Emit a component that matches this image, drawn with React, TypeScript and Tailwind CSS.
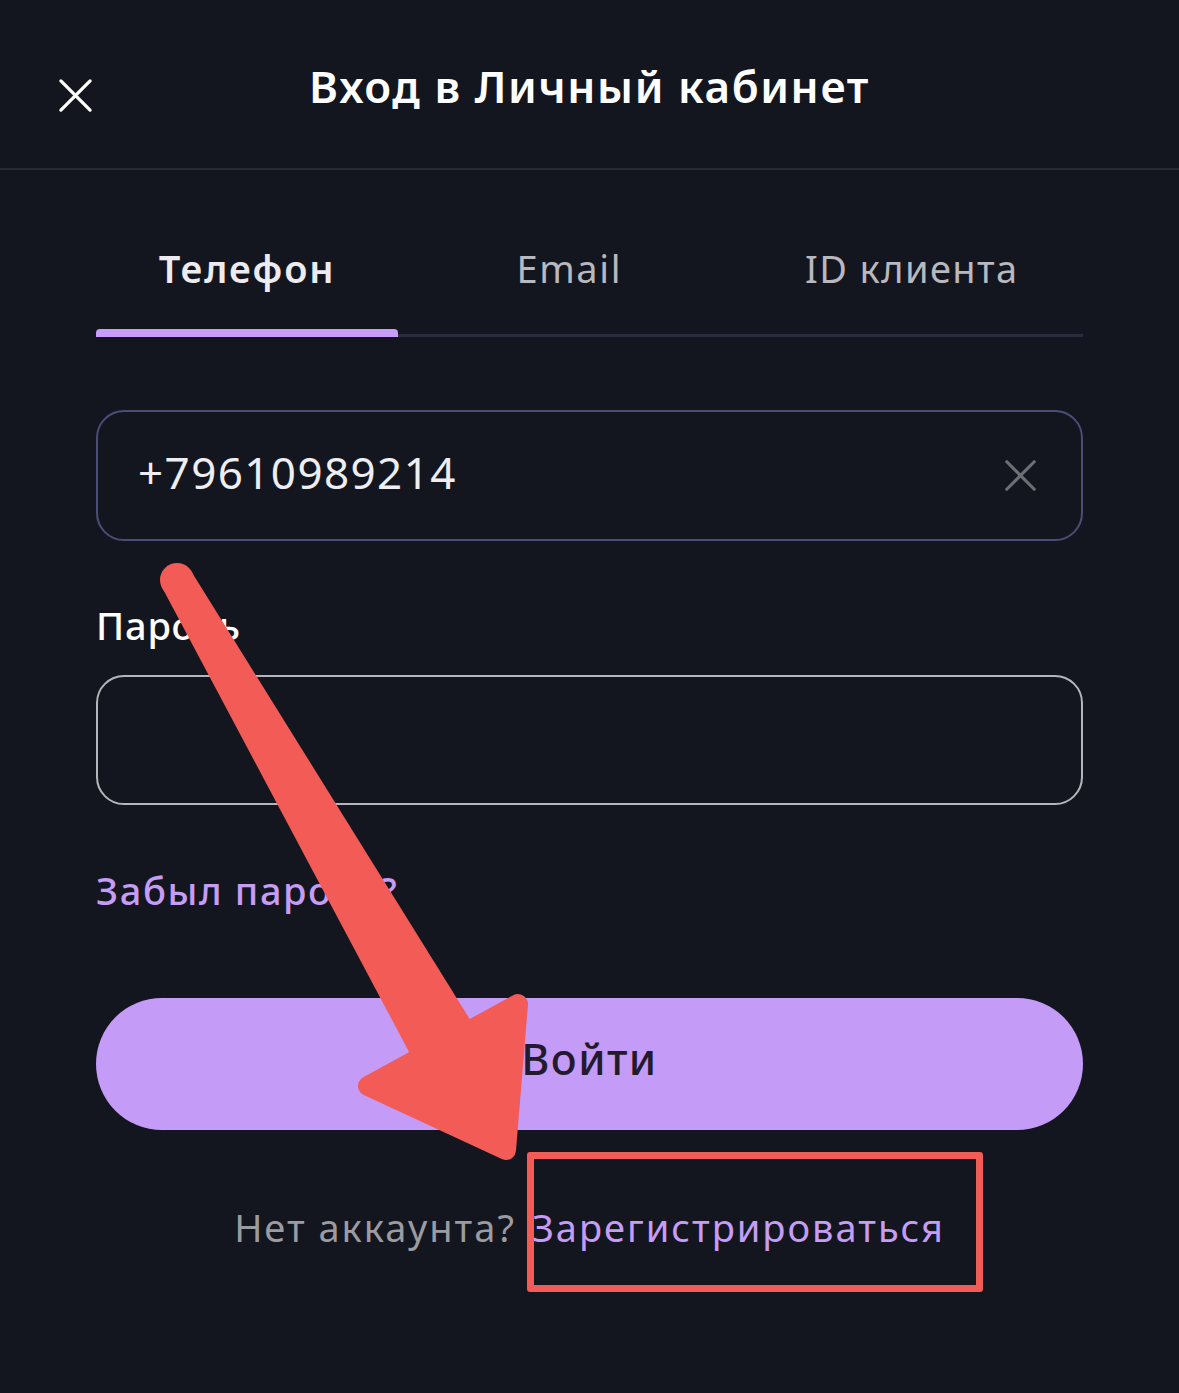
import React from 'react';

const font = { fontFamily: '"Noto Sans", "Open Sans", sans-serif' };

const CloseIcon: React.FC<{ className?: string }> = ({ className }) => (
  <svg viewBox="0 0 36 36" className={className} fill="none" stroke="currentColor" strokeWidth={3.4} strokeLinecap="round">
    <path d="M3 3 L33 33 M33 3 L3 33" />
  </svg>
);

// red markup drawn over the screen: tapered arrow + head
const Annotation: React.FC = () => (
  <svg
    className="absolute left-0 top-0 pointer-events-none"
    width={1179}
    height={1393}
    viewBox="0 0 1179 1393"
  >
    <circle cx={177} cy={580} r={17} fill="#f25b56" />
    <polygon points="191.5,571.7 476.3,1029.6 415.7,1064.4 162.5,588.3" fill="#f25b56" />
    <polygon
      points="368,1086 518,1004 506,1150"
      fill="#f25b56"
      stroke="#f25b56"
      strokeWidth={20}
      strokeLinejoin="round"
    />
  </svg>
);

const App: React.FC = () => {
  return (
    <div className="relative w-[1179px] h-[1393px] bg-[#14161f] overflow-hidden" style={font}>
      <div className="relative h-[170px] flex items-center justify-center border-b-2 border-[#262a35]">
        <button className="absolute left-[58px] top-[78px] w-[35px] h-[35px] text-white">
          <CloseIcon className="w-full h-full" />
        </button>
        <h1 className="text-[44px] font-semibold text-white tracking-[1.6px] mt-[4px]">
          Вход в Личный кабинет
        </h1>
      </div>

      <div className="px-[96px]">
        <div className="pt-[74px] flex">
          <div className="w-[302px] flex flex-col items-center">
            <span className="text-[38px] leading-[48px] font-semibold text-[#ececf0] tracking-[1.8px]">Телефон</span>
            <div className="mt-[37px] h-[8px] w-full rounded-t-[4px] bg-[#c79df9]" />
          </div>
          <div className="flex-1 flex flex-col items-center">
            <span className="text-[38px] leading-[48px] text-[#b8b9bf] tracking-[1.6px]">Email</span>
            <div className="mt-[42px] h-[3px] w-full bg-[#2a2b3d]" />
          </div>
          <div className="flex-1 flex flex-col items-center">
            <span className="text-[38px] leading-[48px] text-[#b8b9bf] tracking-[1.4px]">ID клиента</span>
            <div className="mt-[42px] h-[3px] w-full bg-[#2a2b3d]" />
          </div>
        </div>

        <div className="mt-[73px] h-[131px] rounded-[28px] border-2 border-[#4a4e76] flex items-center justify-between pl-[40px] pr-[44px]">
          <span className="text-[44px] text-[#eeeef2] -mt-[8px] tracking-[1.4px]">+79610989214</span>
          <CloseIcon className="w-[33px] h-[33px] text-[#6e6f75]" />
        </div>

        <div className="mt-[60px] text-[38px] leading-[48px] font-medium text-white tracking-[0.8px]">Пароль</div>

        <div className="mt-[26px] h-[130px] rounded-[28px] border-2 border-[#b5b5bb]" />

        <div className="mt-[61px] text-[38px] leading-[48px] font-medium text-[#c59df6] tracking-[1.6px]">
          Забыл пароль?
        </div>

        <button className="mt-[84px] w-full h-[132px] rounded-full bg-[#c59bf8] flex items-center justify-center">
          <span className="text-[43px] font-medium text-[#231a2e] tracking-[1.4px] -mt-[10px]">Войти</span>
        </button>

        <div className="mt-[73px] text-[38px] leading-[48px] flex justify-center tracking-[2px]">
          <span className="text-[#9b9ca2]">Нет аккаунта?</span>
          <span className="ml-[16px] text-[#c59df6]">Зарегистрироваться</span>
        </div>
      </div>

      <div className="absolute left-[527px] top-[1152px] w-[456px] h-[140px] border-[7px] border-[#f25b56] rounded-[3px]" />
      <Annotation />
    </div>
  );
};

export default App;
